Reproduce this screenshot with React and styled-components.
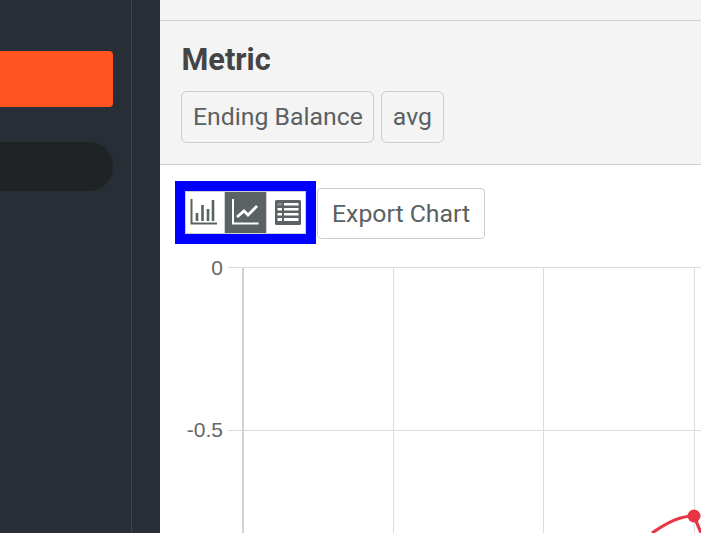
import styled, { createGlobalStyle } from "styled-components";

const GlobalStyle = createGlobalStyle`
  html, body {
    margin: 0;
    height: 100%;
    overflow: hidden;
    background: #fff;
    font-family: Roboto, "Liberation Sans", sans-serif;
  }
`;

const Page = styled.div`
  display: flex;
  width: 701px;
  height: 533px;
  overflow: hidden;
`;

const Sidebar = styled.aside`
  width: 160px;
  flex: none;
  background: #272e36;
`;

const Rail = styled.div`
  width: 132px;
  height: 533px;
  box-sizing: border-box;
  border-right: 1px solid #3d444c;
  padding-top: 51px;
  overflow: hidden;
`;

const PrimaryButton = styled.div`
  width: 133px;
  height: 56px;
  margin-left: -20px;
  background: #ff5420;
  border-radius: 4px;
`;

const Pill = styled.div`
  width: 153px;
  height: 49px;
  margin: 35px 0 0 -40px;
  background: #1f2323;
  border-radius: 25px;
`;

const Main = styled.main`
  flex: 1;
  min-width: 0;
`;

const TopStrip = styled.div`
  height: 21px;
  box-sizing: border-box;
  background: #f4f4f4;
  border-bottom: 1px solid #cdd1d1;
`;

const Header = styled.header`
  height: 144px;
  box-sizing: border-box;
  background: #f4f4f4;
  border-bottom: 1px solid #cdd1d1;
  padding: 21px 21px 0;
`;

const Title = styled.h2`
  margin: 0 0 0 0.5px;
  font-size: 30.7px;
  line-height: 36px;
  font-weight: 700;
  color: #444;
`;

const Tags = styled.div`
  display: flex;
  gap: 7px;
  margin-top: 13px;
`;

const Tag = styled.span`
  display: block;
  padding: 0 ${(p) => p.$right}px 0 11px;
  height: 52px;
  line-height: 50px;
  box-sizing: border-box;
  border: 1px solid #c9cdcd;
  border-radius: 6px;
  font-size: 24.8px;
  color: #5a6163;
  white-space: nowrap;
`;

const Toolbar = styled.div`
  display: flex;
  align-items: flex-start;
  padding: 16px 0 0 15px;
`;

const ViewSwitch = styled.div`
  display: flex;
  border: 10px solid #0000ff;
  background: #fff;
`;

const ViewButton = styled.div`
  width: ${(p) => p.$width}px;
  height: 43px;
  box-sizing: border-box;
  border: 1px solid #cfd2d2;
  border-left-width: ${(p) => (p.$first ? 1 : 0)}px;
  background: ${(p) => (p.$active ? "#5a6263" : "#fff")};
  color: ${(p) => (p.$active ? "#fff" : "#5a6263")};
  display: flex;
  align-items: center;
  justify-content: center;
  padding-left: ${(p) => p.$inset || 0}px;

  svg {
    display: block;
  }
`;

const ExportButton = styled.div`
  height: 51px;
  line-height: 49px;
  box-sizing: border-box;
  margin: 7px 0 0 1px;
  padding: 0 14px;
  border: 1px solid #c9cdcd;
  border-radius: 4px;
  font-size: 24.8px;
  color: #5a6163;
  white-space: nowrap;
`;

const ChartSvg = styled.svg`
  display: block;
  width: 541px;
  height: 289px;

  text {
    font-family: "Liberation Sans", Arial, sans-serif;
    font-size: 21px;
    fill: #666;
    text-anchor: end;
  }
`;

function BarIcon() {
  return (
    <svg width="30" height="27" viewBox="0 0 30 27" fill="none" stroke="currentColor" strokeWidth="2">
      <path d="M1.500 0v24.500h25.500" />
      <path d="M7 22v-8M12.500 22V6M18 22V10M23 22V1" strokeWidth="2.600" />
    </svg>
  );
}

function LineIcon() {
  return (
    <svg width="30" height="27" viewBox="0 0 30 27" fill="none" stroke="currentColor" strokeWidth="2">
      <path d="M2 0v24.500h25.500" />
      <path d="M6 18l7-6 4 4 9-9" strokeWidth="2.800" />
    </svg>
  );
}

function TableIcon() {
  return (
    <svg width="26" height="25" viewBox="0 0 26 25">
      <rect width="26" height="25" rx="1.500" fill="currentColor" />
      <rect x="9" y="3" width="14.500" height="2.500" fill="#fff" />
      <rect x="9" y="8" width="14.500" height="2.500" fill="#fff" />
      <rect x="9" y="13" width="14.500" height="2.500" fill="#fff" />
      <rect x="9" y="18" width="14.500" height="3" fill="#fff" />
      <rect x="2.500" y="3" width="4.500" height="2.500" fill="#8a9091" />
      <rect x="2.500" y="8" width="4.500" height="2.500" fill="#fff" />
      <rect x="2.500" y="13" width="4.500" height="2.500" fill="#fff" />
      <rect x="2.500" y="18" width="4.500" height="3" fill="#fff" />
    </svg>
  );
}

function Chart() {
  return (
    <ChartSvg viewBox="160 244 541 289">
      <g stroke="#dcdcdc" strokeWidth="1">
        <path d="M228 267.500H701M228 430.500H701" />
        <path d="M393.500 268V533M543.500 268V533M694.500 268V533" />
      </g>
      <path d="M243 268V533" stroke="#d2d2d2" strokeWidth="2" />
      <text x="223" y="274.500">0</text>
      <text x="223" y="437">-0.5</text>
      <path d="M652 533C668 522 680 516 694 516L701 533" fill="none" stroke="#e83545" strokeWidth="3.200" />
      <circle cx="694" cy="516" r="6.500" fill="#e83545" />
    </ChartSvg>
  );
}

export default function App() {
  return (
    <Page>
      <GlobalStyle />
      <Sidebar>
        <Rail>
          <PrimaryButton />
          <Pill />
        </Rail>
      </Sidebar>
      <Main>
        <TopStrip />
        <Header>
          <Title>Metric</Title>
          <Tags>
            <Tag $right={10}>Ending Balance</Tag>
            <Tag $right={11}>avg</Tag>
          </Tags>
        </Header>
        <Toolbar>
          <ViewSwitch>
            <ViewButton $width={40} $first>
              <BarIcon />
            </ViewButton>
            <ViewButton $width={42} $active>
              <LineIcon />
            </ViewButton>
            <ViewButton $width={39} $inset={4}>
              <TableIcon />
            </ViewButton>
          </ViewSwitch>
          <ExportButton>Export Chart</ExportButton>
        </Toolbar>
        <Chart />
      </Main>
    </Page>
  );
}
